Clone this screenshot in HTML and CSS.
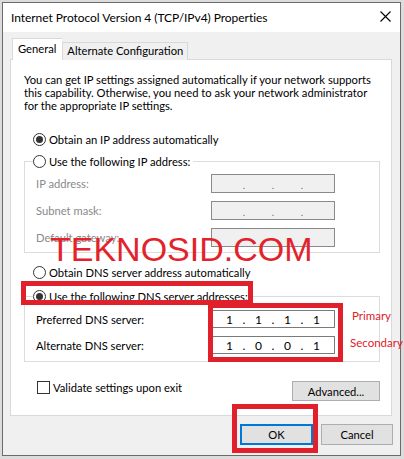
FILE: index.html
```html
<!DOCTYPE html>
<html lang="en">
<head>
    <meta charset="UTF-8">
    <title>Internet Protocol Version 4 (TCP/IPv4) Properties</title>
    <link rel="stylesheet" href="styles.css">
</head>
<body>
    <div class="window">
        <div class="titlebar">
            <span class="title">Internet Protocol Version 4 (TCP/IPv4) Properties</span>
            <svg class="close" width="11" height="11" viewBox="0 0 11 11">
                <path d="M0.5 0.5 L10.5 10.5 M10.5 0.5 L0.5 10.5" stroke="#000" stroke-width="1.1" fill="none"/>
            </svg>
        </div>
        <div class="body">
            <div class="tabs">
                <div class="tab active">General</div>
                <div class="tab">Alternate Configuration</div>
            </div>
            <div class="panel">
                <p class="intro">You can get IP settings assigned automatically if your network supports this capability. Otherwise, you need to ask your network administrator for the appropriate IP settings.</p>

                <div class="radio-row first"><span class="radio checked"></span>Obtain an IP address automatically</div>

                <div class="group ip-group disabled">
                    <div class="group-title"><span class="radio"></span>Use the following IP address:</div>
                    <div class="field-row first"><label>IP address:</label>
                        <div class="ip-box"><span></span><i>.</i><span></span><i>.</i><span></span><i>.</i><span></span></div>
                    </div>
                    <div class="field-row"><label>Subnet mask:</label>
                        <div class="ip-box"><span></span><i>.</i><span></span><i>.</i><span></span><i>.</i><span></span></div>
                    </div>
                    <div class="field-row"><label>Default gateway:</label>
                        <div class="ip-box"><span></span><i></i><span></span><i></i><span></span><i></i><span></span></div>
                    </div>
                </div>

                <div class="radio-row dns-auto"><span class="radio"></span>Obtain DNS server address automatically</div>

                <div class="group dns-group">
                    <div class="group-title"><span class="radio checked"></span>Use the following DNS server addresses:</div>
                    <div class="field-row first"><label>Preferred DNS server:</label>
                        <div class="ip-box"><span>1</span><i>.</i><span>1</span><i>.</i><span>1</span><i>.</i><span>1</span></div>
                    </div>
                    <div class="field-row"><label>Alternate DNS server:</label>
                        <div class="ip-box"><span>1</span><i>.</i><span>0</span><i>.</i><span>0</span><i>.</i><span>1</span></div>
                    </div>
                </div>

                <div class="bottom-row">
                    <div class="check-row"><span class="checkbox"></span>Validate settings upon exit</div>
                    <button class="btn advanced">Advanced...</button>
                </div>
            </div>
            <div class="actions">
                <button class="btn ok">OK</button>
                <button class="btn">Cancel</button>
            </div>
        </div>
    </div>

    <!-- annotations drawn over the screenshot -->
    <div class="watermark">TEKNOSID.COM</div>
    <div class="mark mark-radio"></div>
    <div class="mark mark-fields"></div>
    <div class="mark mark-ok"></div>
    <div class="note note-primary">Primary</div>
    <div class="note note-secondary">Secondary</div>
</body>
</html>
```

FILE: styles.css
```css
body {
    margin: 0;
    width: 404px;
    height: 459px;
    overflow: hidden;
    position: relative;
    background: #dcdcdc;
    font-family: Lato, "Noto Sans", sans-serif;
    font-size: 11.2px;
    color: #000;
}
.window {
    margin: 2px 0 0 2px;
    width: 399px;
    height: 454px;
    box-sizing: border-box;
    border: 1px solid #6b6b6b;
    background: #f0f0f0;
    display: flex;
    flex-direction: column;
}
.titlebar {
    height: 29px;
    background: #fff;
    display: flex;
    align-items: center;
    justify-content: space-between;
    padding: 0 9px 0 8px;
}
.title { font-size: 12px; letter-spacing: -0.05px; }
.close { margin-top: -2px; }

.body { padding: 7px 7px 0 7px; }

.tabs {
    display: flex;
    align-items: flex-end;
    margin-left: 2px;
    height: 21px;
    position: relative;
    z-index: 1;
    margin-bottom: -1px;
}
.tab {
    box-sizing: border-box;
    height: 18px;
    line-height: 16px;
    padding: 0 4px;
    border: 1px solid #d9d9d9;
    border-bottom: none;
    background: #f0f0f0;
}
.tab.active {
    height: 22px;
    line-height: 19px;
    background: #fff;
    border-right: none;
    padding: 0 6px 0 5px;
}

.panel {
    background: #fff;
    border: 1px solid #d9d9d9;
    margin-right: 1px;
    padding: 0 11px 14px 13px;
    display: flex;
    flex-direction: column;
}
.intro {
    margin: 13px 6px 0 0;
    line-height: 13px;
}

.radio-row, .group-title, .check-row {
    display: flex;
    align-items: center;
    height: 17px;
}
.radio-row { margin-left: 9px; }
.radio-row.first { margin-top: 19px; }
.radio-row.dns-auto { margin-top: 11px; }

.radio {
    width: 11px;
    height: 11px;
    border: 1px solid #333;
    border-radius: 50%;
    background: #fff;
    margin-right: 3px;
    position: relative;
}
.radio.checked::after {
    content: "";
    position: absolute;
    left: 2px;
    top: 2px;
    width: 7px;
    height: 7px;
    border-radius: 50%;
    background: #333;
}

.group {
    border: 1px solid #dcdcdc;
    padding: 0 0 5px 11px;
}
.ip-group { margin-top: 13px; }
.dns-group { margin-top: 15px; padding-bottom: 7px; }
.group-title {
    margin: -9px 0 0 -3px;
    padding-right: 3px;
    background: #fff;
    align-self: flex-start;
    width: max-content;
}

.field-row {
    display: flex;
    align-items: center;
    margin-top: 8px;
}
.field-row.first { margin-top: 4px; }
.dns-group .field-row.first { margin-top: 5px; }
.field-row label { width: 175px; }

.ip-box {
    box-sizing: border-box;
    width: 124px;
    height: 19px;
    border: 1px solid #7a7a7a;
    background: #fff;
    display: flex;
    align-items: center;
    padding-left: 5px;
    font-size: 12px;
}
.dns-group .ip-box { height: 18px; }
.ip-box span { width: 25px; text-align: center; }
.ip-box i { width: 4px; font-style: normal; text-align: center; }

.disabled .field-row label { color: #8a8a8a; }
.disabled .ip-box { background: #f0f0f0; border-color: #8a8a8a; }
.disabled .ip-box i { color: #6a6a6a; font-size: 10px; padding-top: 3px; }

.bottom-row {
    display: flex;
    justify-content: space-between;
    align-items: flex-start;
    margin-top: 19px;
}
.check-row { margin-left: 13px; height: 13px; }
.checkbox {
    width: 11px;
    height: 11px;
    border: 1px solid #333;
    background: #fff;
    margin-right: 3px;
}

.btn {
    font-family: inherit;
    font-size: 11.2px;
    color: #000;
    background: #e1e1e1;
    border: 1px solid #adadad;
    padding: 0;
    box-sizing: border-box;
}
.advanced { width: 88px; height: 20px; }

.actions {
    display: flex;
    justify-content: flex-end;
    gap: 8px;
    margin-top: 8px;
}
.actions .btn { width: 72px; height: 21px; }
.actions .ok { width: 73px; border: 2px solid #0078d7; }

/* red markup on top of the dialog */
.watermark {
    position: absolute;
    left: 50px;
    top: 232px;
    font-family: "Liberation Sans", Arial, sans-serif;
    font-size: 34px;
    line-height: 34px;
    color: #e2232b;
}
.mark {
    position: absolute;
    border: 5px solid #e0202a;
    box-sizing: border-box;
}
.mark-radio { left: 21px; top: 281px; width: 232px; height: 24px; }
.mark-fields { left: 208px; top: 303px; width: 135px; height: 59px; }
.mark-ok { left: 232px; top: 404px; width: 86px; height: 49px; }
.note {
    position: absolute;
    font-family: Lato, sans-serif;
    font-size: 11.5px;
    color: #e0202a;
}
.note-primary { left: 352px; top: 309px; }
.note-secondary { left: 350px; top: 336px; }
```
